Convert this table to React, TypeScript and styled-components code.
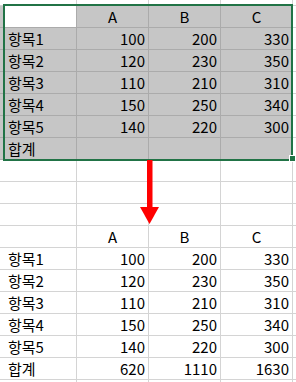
import styled, { createGlobalStyle } from 'styled-components';

const GlobalStyle = createGlobalStyle`
  html, body {
    margin: 0;
    padding: 0;
    background: #ffffff;
    overflow: hidden;
  }
`;

const GRID = '#d4d4d4';
const GRID_SEL = '#ababab';
const SEL_FILL = '#c6c6c6';
const EXCEL_GREEN = '#217346';

type Align = 'left' | 'right' | 'center';

const Sheet = styled.div`
  position: relative;
  width: 296px;
  height: 382px;
  overflow: hidden;
  font-family: 'Noto Sans CJK KR', 'Noto Sans', sans-serif;
  font-size: 15px;
  color: #000000;
`;

const Row = styled.div<{ $height: number }>`
  display: grid;
  grid-template-columns: 5px repeat(4, 72px) 3px;
  height: ${(p) => p.$height}px;
`;

const Cell = styled.div<{ $align?: Align; $selected?: boolean; $active?: boolean; $edge?: boolean }>`
  box-sizing: border-box;
  display: flex;
  align-items: center;
  justify-content: ${(p) =>
    p.$align === 'right' ? 'flex-end' : p.$align === 'center' ? 'center' : 'flex-start'};
  padding: 0 3px 0 3px;
  border-right: ${(p) => (p.$edge ? 'none' : `1px solid ${p.$selected ? GRID_SEL : GRID}`)};
  border-bottom: 1px solid ${(p) => (p.$selected ? GRID_SEL : GRID)};
  background: ${(p) => (p.$selected && !p.$active ? SEL_FILL : '#ffffff')};
  white-space: nowrap;
  line-height: 21px;
  overflow: hidden;
`;

const Selection = styled.div`
  position: absolute;
  left: 3px;
  top: 4px;
  width: 290px;
  height: 157px;
  box-sizing: border-box;
  border: 2px solid ${EXCEL_GREEN};
  pointer-events: none;
`;

const FillHandle = styled.div`
  position: absolute;
  left: 289px;
  top: 155px;
  width: 7px;
  height: 7px;
  box-sizing: border-box;
  background: ${EXCEL_GREEN};
  border: 1px solid #ffffff;
`;

const Arrow = styled.svg`
  position: absolute;
  left: 138px;
  top: 159px;
`;

type SheetRow = { cells: string[]; selected?: boolean; height?: number };

const header = ['', 'A', 'B', 'C'];
const items = [
  ['항목1', '100', '200', '330'],
  ['항목2', '120', '230', '350'],
  ['항목3', '110', '210', '310'],
  ['항목4', '150', '250', '340'],
  ['항목5', '140', '220', '300'],
];

const rows: SheetRow[] = [
  { cells: ['', '', '', ''], height: 6 },
  { cells: header, selected: true },
  ...items.map((cells) => ({ cells, selected: true })),
  { cells: ['합계', '', '', ''], selected: true },
  { cells: ['', '', '', ''] },
  { cells: ['', '', '', ''] },
  { cells: ['', '', '', ''] },
  { cells: header },
  ...items.map((cells) => ({ cells })),
  { cells: ['합계', '620', '1110', '1630'] },
  { cells: ['', '', '', ''], height: 3 },
];

function alignFor(rowCells: string[], col: number): Align {
  if (rowCells === header) return 'center';
  return col === 0 ? 'left' : 'right';
}

export default function App() {
  return (
    <>
      <GlobalStyle />
      <Sheet>
        {rows.map((row, r) => (
          <Row key={r} $height={row.height ?? 22}>
            <Cell $selected={row.selected} />
            {row.cells.map((text, c) => (
              <Cell
                key={c}
                $align={alignFor(row.cells, c)}
                $selected={row.selected}
                $active={row.selected && r === 1 && c === 0}
              >
                {text}
              </Cell>
            ))}
            <Cell $edge />
          </Row>
        ))}
        <Selection />
        <FillHandle />
        <Arrow width="24" height="68" viewBox="0 0 24 68">
          <rect x="9" y="1" width="5.5" height="48" fill="#ff0000" />
          <polygon points="2,48 21,48 11.5,65" fill="#ff0000" />
        </Arrow>
      </Sheet>
    </>
  );
}
